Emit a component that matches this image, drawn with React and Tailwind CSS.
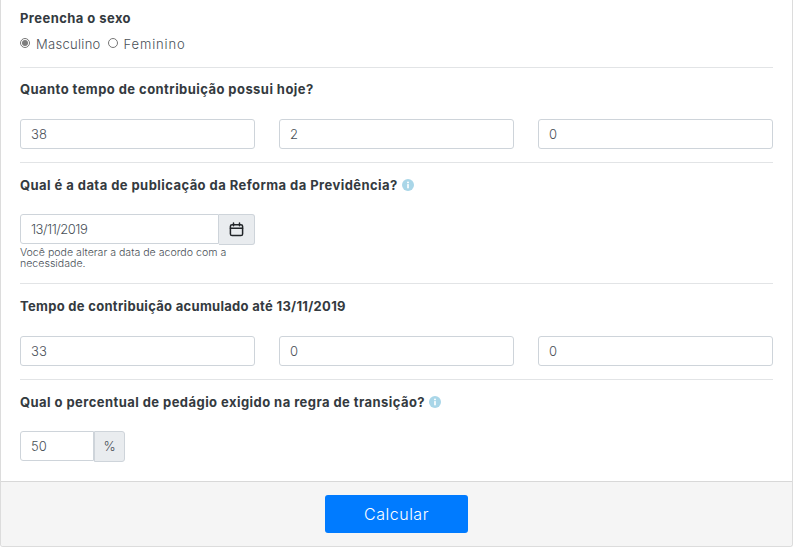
import React from 'react';

function Title({ children, info = false, className = 'tracking-[0.44px]' }) {
  return (
    <div className={`flex h-4 items-center text-[13px] font-bold leading-4 text-[#343a40] ${className}`}>
      <span>{children}</span>
      {info ? (
        <svg viewBox="0 0 16 16" className="ml-1 h-3 w-3">
          <circle cx="8" cy="8" r="8" fill="#a9d6e8" />
          <rect x="6.9" y="6.8" width="2.2" height="5.6" fill="#fff" />
          <circle cx="8" cy="4.5" r="1.3" fill="#fff" />
        </svg>
      ) : null}
    </div>
  );
}

function TextInput({ value, className = '' }) {
  return (
    <input
      readOnly
      value={value}
      className={`h-[30px] rounded-[3px] border border-[#ced4da] bg-white px-2.5 text-[13px] font-light text-[#495057] outline-none ${className}`}
    />
  );
}

function ThreeInputs({ values }) {
  return (
    <div className="mt-[22px] grid grid-cols-3 gap-6">
      {values.map((value, index) => (
        <TextInput key={index} value={value} className="w-full" />
      ))}
    </div>
  );
}

function Radio({ checked }) {
  return (
    <span className="flex h-[10px] w-[10px] items-center justify-center rounded-full border border-[#767676] bg-white">
      {checked ? <span className="h-[6px] w-[6px] rounded-full bg-[#7d7d7d]" /> : null}
    </span>
  );
}

export default function App() {
  return (
    <div className="h-[551px] w-[796px] overflow-hidden bg-white font-['Inter',sans-serif]">
      <div className="h-[547px] w-[793px] rounded-b-[3px] border-x border-b border-[#dcdcdc]">
        <div className="h-[481px] px-[19px]">
          <div className="h-[68px] border-b border-[#e2e4e6] pt-[10px]">
            <Title>Preencha o sexo</Title>
            <div className="mt-2 flex h-5 items-center text-[13px] font-light tracking-[0.3px] text-[#495057]">
              <span className="-mt-[2px]"><Radio checked /></span>
              <span className="ml-[6px] mt-[1px]">Masculino</span>
              <span className="ml-[7px] -mt-[2px]"><Radio /></span>
              <span className="ml-[6px] mt-[1px] tracking-[0.85px]">Feminino</span>
            </div>
          </div>

          <div className="h-[95px] border-b border-[#e2e4e6] pt-[13px]">
            <Title>Quanto tempo de contribuição possui hoje?</Title>
            <ThreeInputs values={['38', '2', '0']} />
          </div>

          <div className="h-[121px] border-b border-[#e2e4e6] pt-[14px]">
            <Title info>Qual é a data de publicação da Reforma da Previdência?</Title>
            <div className="mt-[21px] flex h-[31px] w-[235px]">
              <TextInput value="13/11/2019" className="w-[199px] rounded-r-none tracking-[-0.5px]" />
              <div className="flex h-[31px] w-9 items-center justify-center rounded-r-[3px] border border-l-0 border-[#ced4da] bg-[#e9ecef]">
                <svg viewBox="0 0 16 16" className="h-[15px] w-[15px]" fill="none" stroke="#212529" strokeWidth="1.6" strokeLinecap="round">
                  <rect x="1.5" y="2.8" width="13" height="11.7" rx="1.8" />
                  <path d="M1.5 6.6h13M4.8 1v3M11.2 1v3" />
                </svg>
              </div>
            </div>
            <p className="mt-[2px] w-[235px] text-[10.6px] font-light leading-[11px] text-[#495057]">
              Você pode alterar a data de acordo com a necessidade.
            </p>
          </div>

          <div className="h-[96px] border-b border-[#e2e4e6] pt-[14px]">
            <Title className="tracking-[0.3px]">Tempo de contribuição acumulado até 13/11/2019</Title>
            <ThreeInputs values={['33', '0', '0']} />
          </div>

          <div className="pt-[14px]">
            <Title info>Qual o percentual de pedágio exigido na regra de transição?</Title>
            <div className="mt-[21px] flex h-[31px]">
              <TextInput value="50" className="w-[74px] rounded-r-none" />
              <div className="flex h-[31px] w-[31px] items-center justify-center rounded-r-[3px] border border-[#ced4da] bg-[#e9ecef] text-[13px] font-light text-[#495057]">
                %
              </div>
            </div>
          </div>
        </div>

        <div className="flex h-[65px] justify-center rounded-b-[3px] border-t border-[#d8d8d8] bg-[#f5f5f5] pt-[13px]">
          <button type="button" className="h-[38px] w-[143px] rounded-[3px] bg-[#007bff] text-base font-light tracking-[0.5px] text-white">
            Calcular
          </button>
        </div>
      </div>
    </div>
  );
}
